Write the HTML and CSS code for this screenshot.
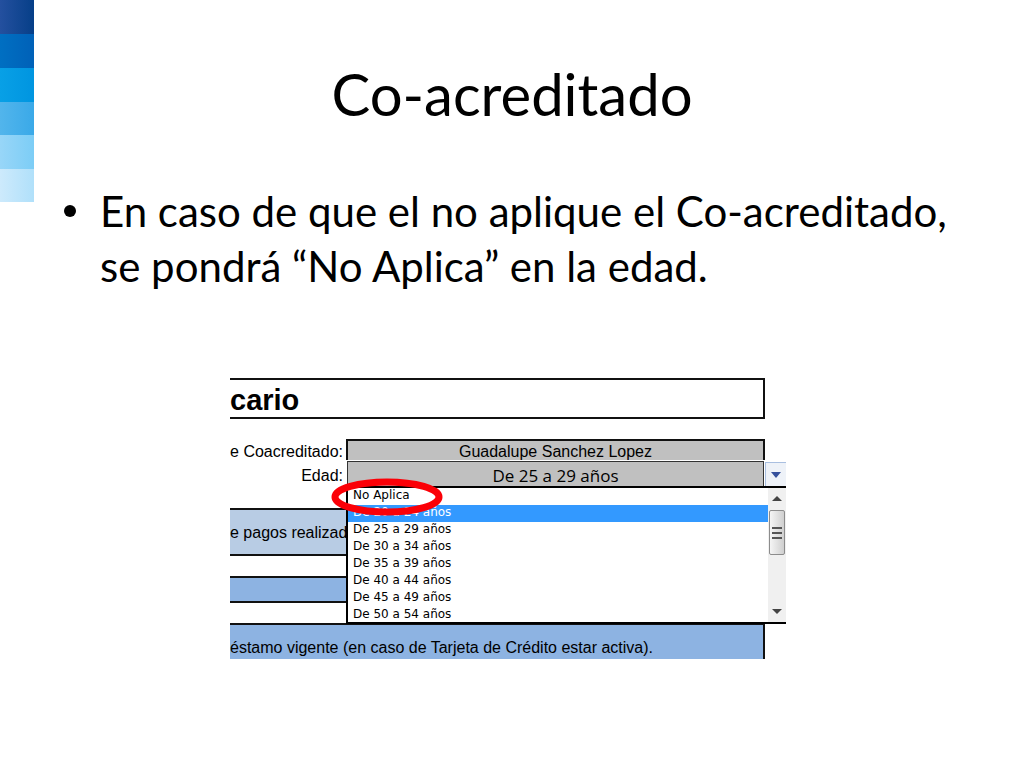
FILE: index.html
```html
<!DOCTYPE html>
<html lang="es">
<head>
    <meta charset="utf-8">
    <title>Co-acreditado</title>
    <link rel="stylesheet" href="styles.css">
</head>
<body>
<div class="slide">
    <aside class="stripes">
        <div class="stripe navy"></div>
        <div class="stripe royal"></div>
        <div class="stripe azure"></div>
        <div class="stripe sky"></div>
        <div class="stripe light"></div>
        <div class="stripe pale"></div>
    </aside>

    <main>
        <h1>Co-acreditado</h1>
        <ul class="points">
            <li>En caso de que el no aplique el Co-acreditado, se pondrá “No Aplica” en la edad.</li>
        </ul>

        <div class="sheet-area">
            <form class="sheet">
                <div class="sheet-title">cario</div>

                <div class="fields">
                    <label for="nameInput">e Coacreditado:</label>
                    <input type="text" id="nameInput" value="Guadalupe Sanchez Lopez" readonly>
                    <label for="ageSelect">Edad:</label>
                    <div class="age">
                        <select id="ageSelect">
                            <option>De 25 a 29 años</option>
                        </select>
                        <button type="button" class="open-button" aria-label="Abrir lista">
                            <svg width="10" height="6" viewBox="0 0 10 6"><path d="M0 0H10L5 6Z" fill="#35509c"/></svg>
                        </button>
                        <div class="menu">
                            <select id="ageList" size="8" aria-label="Edad">
                                <option>No Aplica</option>
                                <option selected>De 20 a 24 años</option>
                                <option>De 25 a 29 años</option>
                                <option>De 30 a 34 años</option>
                                <option>De 35 a 39 años</option>
                                <option>De 40 a 44 años</option>
                                <option>De 45 a 49 años</option>
                                <option>De 50 a 54 años</option>
                            </select>
                            <div class="scrollbar">
                                <svg width="10" height="5" viewBox="0 0 10 5"><path d="M5 0L10 5H0Z" fill="#444"/></svg>
                                <div class="thumb"><span></span><span></span><span></span></div>
                                <svg class="down" width="10" height="5" viewBox="0 0 10 5"><path d="M0 0H10L5 5Z" fill="#444"/></svg>
                            </div>
                        </div>
                        <svg class="circle" width="112" height="38" viewBox="0 0 112 38">
                            <ellipse cx="56" cy="19" rx="52" ry="15" fill="none" stroke="#fb0007" stroke-width="7"/>
                        </svg>
                    </div>
                </div>

                <div class="band payments">e pagos realizad</div>
                <div class="band empty"></div>
                <div class="band loan">éstamo vigente (en caso de Tarjeta de Crédito estar activa).</div>
            </form>
        </div>
    </main>
</div>
</body>
</html>
```
FILE: styles.css
```css
:root {
    --cell-bg: #c0c0c0;
    --band-pale: #b8cce4;
    --band-blue: #8db3e2;
    --highlight: #3399ff;
    --line: #111111;
}

* {
    box-sizing: border-box;
}

body {
    margin: 0;
    background: #ffffff;
    color: #000000;
    font-family: Lato, sans-serif;
}

.slide {
    display: grid;
    grid-template-columns: 34px 1fr;
}

.stripes {
    display: flex;
    flex-direction: column;
}

.stripe { height: 34px; }
.navy { background: linear-gradient(to right, #24509f, #063f88); }
.royal { background: linear-gradient(to right, #006fc2, #0061b8); }
.azure { background: linear-gradient(to right, #08a0e6, #0095e0); }
.sky { height: 33px; background: linear-gradient(to right, #52b5ec, #3aa9e8); }
.light { background: linear-gradient(to right, #98d6f8, #7ccdf6); }
.pale { height: 33px; background: linear-gradient(to right, #cdeafc, #b0e0fa); }

main {
    padding: 58px 34px 40px 0;
}

h1 {
    margin: 0;
    font-size: 58px;
    font-weight: 400;
    line-height: 72px;
    text-align: center;
}

.points {
    margin: 54px 0 0;
    padding: 0 10px 0 66px;
    list-style: none;
    font-size: 42px;
    line-height: 55px;
}

.points li::before {
    content: "";
    float: left;
    width: 12px;
    height: 12px;
    margin: 21px 0 0 -36px;
    border-radius: 50%;
    background: #000000;
}

.sheet-area {
    display: flex;
    justify-content: center;
    margin-top: 84px;
    padding-right: 8px;
}

.sheet {
    width: 100%;
    max-width: 556px;
    padding-right: 21px;
    font-family: "Liberation Sans", Arial, sans-serif;
    font-size: 16px;
}

.sheet-title {
    height: 41px;
    border: 2px solid var(--line);
    border-left: none;
    font-size: 29px;
    font-weight: 700;
    line-height: 41px;
}

.fields {
    display: grid;
    grid-template-columns: 116px 1fr;
    grid-template-rows: 21px 28px;
    margin: 20px 0;
}

.fields label {
    padding-right: 3px;
    line-height: 26px;
    text-align: right;
    white-space: nowrap;
}

.fields label[for="ageSelect"] {
    line-height: 32px;
}

#nameInput,
#ageSelect {
    width: 100%;
    height: 100%;
    margin: 0;
    padding: 0;
    border: 2px solid var(--line);
    border-radius: 0;
    background: var(--cell-bg);
    color: #000000;
    font: inherit;
    text-align: center;
    outline: none;
}

#nameInput {
    border-bottom: none;
    padding-top: 3px;
}

.age {
    position: relative;
}

#ageSelect {
    appearance: none;
    border: 2px solid #333333;
    outline: 1px solid #ffffff;
    outline-offset: -1px;
    padding-top: 2px;
    font-family: "Open Sans", sans-serif;
    font-size: 17px;
    text-align-last: center;
}

.open-button {
    position: absolute;
    top: 2px;
    left: 100%;
    display: flex;
    align-items: center;
    justify-content: center;
    width: 21px;
    height: 26px;
    padding: 0;
    border: 1px solid #a9bfe0;
    border-right: none;
    background: #eef2f8;
}

.menu {
    position: absolute;
    top: 26px;
    left: 0;
    right: -21px;
    display: flex;
    border: 2px solid #000000;
    border-right: none;
    background: #ffffff;
}

#ageList {
    flex: 1;
    height: 134px;
    padding: 0;
    border: none;
    border-radius: 0;
    background: #ffffff;
    font-family: "DejaVu Sans", sans-serif;
    font-size: 12px;
    overflow: hidden;
    outline: none;
}

#ageList option {
    height: 17px;
    min-height: 17px;
    padding: 0 5px;
    color: #000000;
    line-height: 17px;
}

#ageList option:checked {
    background: linear-gradient(var(--highlight), var(--highlight));
    color: #ffffff;
}

.scrollbar {
    display: flex;
    flex-direction: column;
    align-items: center;
    width: 18px;
    padding: 8px 0;
    background: #f0f0f0;
}

.thumb {
    display: flex;
    flex-direction: column;
    align-items: center;
    justify-content: center;
    gap: 3px;
    width: 16px;
    height: 45px;
    margin-top: 9px;
    border: 1px solid #8c8c8c;
    border-radius: 2px;
    background: linear-gradient(to right, #f5f5f5, #cfcfcf);
}

.thumb span {
    width: 10px;
    height: 2px;
    background: #555555;
}

.down {
    margin-top: auto;
}

.circle {
    position: absolute;
    top: 18px;
    left: -15px;
}

.band {
    border: 2px solid var(--line);
    border-left: none;
    background: var(--band-blue);
    white-space: nowrap;
    overflow: hidden;
}

.payments {
    height: 48px;
    margin-bottom: 20px;
    background: var(--band-pale);
    line-height: 46px;
}

.empty {
    height: 27px;
    margin-bottom: 20px;
}

.loan {
    height: 36px;
    border-bottom: none;
    line-height: 46px;
}
```
